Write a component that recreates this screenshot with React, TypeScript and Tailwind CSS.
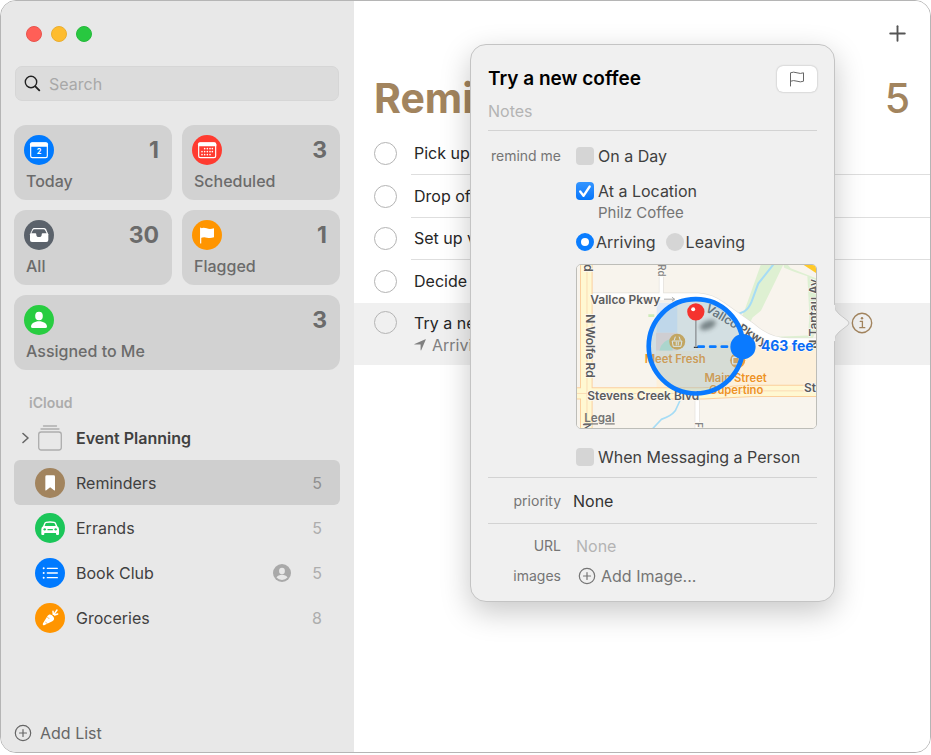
import type { ReactNode } from "react"
import { Plus } from "lucide-react"

const TodayIcon = () => (
    <>
        <rect x="20" y="24" width="50" height="44" rx="5" fill="none" stroke="#fff" strokeWidth="3.5" />
        <path d="M18 35V28q0-6 6-6h42q6 0 6 6v7z" fill="#fff" />
        <text x="45" y="57" textAnchor="middle" fontSize="22" fontWeight="700" fill="#fff">2</text>
    </>
)

const dots = [
    [38, 41], [46, 41], [54, 41], [61, 41],
    [30, 50], [38, 50], [46, 50], [54, 50], [61, 50],
    [30, 59], [38, 59], [46, 59], [54, 59],
]

const ScheduledIcon = () => (
    <>
        <rect x="20" y="24" width="51" height="44" rx="5" fill="none" stroke="#fff" strokeWidth="3.5" />
        <path d="M18 34V28q0-6 6-6h43q6 0 6 6v6z" fill="#fff" />
        {dots.map(([x, y]) => (
            <circle key={`${x}-${y}`} cx={x} cy={y} r="2.4" fill="#fff" />
        ))}
    </>
)

const AllIcon = () => (
    <>
        <path d="M30 24h30q4 0 6 4l7 15v17q0 6-6 6H24q-6 0-6-6V43l7-15q2-4 5-4z" fill="#fff" />
        <path d="M31 28h28q3 0 4 2l5 10H56q-3 0-3 4a8 7 0 0 1-16 0q0-4-3-4H22l5-10q1-2 4-2z" fill="#5b626b" />
    </>
)

const FlaggedIcon = () => (
    <>
        <path d="M26 24v45" stroke="#fff" strokeWidth="3.5" strokeLinecap="round" />
        <path d="M26 25q9-4 18 0t22 0v27q-11 4-21 1t-19 1z" fill="#fff" />
    </>
)

const PersonIcon = () => (
    <>
        <ellipse cx="45" cy="33" rx="11.5" ry="13" fill="#fff" />
        <path d="M21 65c0-9 11-16 24-16s24 7 24 16q0 4-5 4H26q-5 0-5-4z" fill="#fff" />
    </>
)

const BookmarkIcon = () => (
    <path d="M31 26q0-4 4-4h21q4 0 4 4v39q0 4-3 2L45.500 58 34 67q-3 2-3-2z" fill="#fff" />
)

const CarIcon = () => (
    <>
        <path
            fillRule="evenodd"
            d="M33 26q12-2 25 0 4 1 5 4l4 10q5 3 5 9v14q0 3-3 3h-3q-3 0-3-3v-3H28v3q0 3-3 3h-3q-3 0-3-3V49q0-6 5-9l4-10q1-3 5-4zM34 30q11-1 22 0 3 0 4 3l2 6H29l2-6q1-3 3-3z"
            fill="#fff"
        />
        <circle cx="29" cy="49" r="3.5" fill="#1bc659" />
        <circle cx="62" cy="49" r="3.5" fill="#1bc659" />
        <path d="M39 50h13" stroke="#1bc659" strokeWidth="4" strokeLinecap="round" />
    </>
)

const ListIcon = () => (
    <>
        <path d="M37 31h30M37 45h30M37 59h30" stroke="#fff" strokeWidth="4" strokeLinecap="round" />
        <circle cx="26" cy="31" r="3" fill="#fff" />
        <circle cx="26" cy="45" r="3" fill="#fff" />
        <circle cx="26" cy="59" r="3" fill="#fff" />
    </>
)

const CarrotIcon = () => (
    <>
        <path d="M24 66c-1-1-1-3 0-5l13-21c4-6 9-7 14-3l4 4c4 5 3 10-3 14L29 66c-2 1-4 1-5 0z" fill="#fff" />
        <path d="M55 34l-1-9M57 34l9-13M59 36l9-3" stroke="#fff" strokeWidth="4.5" strokeLinecap="round" />
        <path d="M37 42l5 5M37 62l-5-4" stroke="#ff9500" strokeWidth="2" strokeLinecap="round" />
    </>
)

function Badge({ color, children }: { color: string; children: ReactNode }) {
    return (
        <svg viewBox="0 0 90 90" className={`size-[30px] shrink-0 rounded-full ${color}`} aria-hidden="true">
            {children}
        </svg>
    )
}

const cards = [
    { title: "Today", count: 1, color: "bg-[#007aff]", icon: TodayIcon },
    { title: "Scheduled", count: 3, color: "bg-[#ff3b30]", icon: ScheduledIcon },
    { title: "All", count: 30, color: "bg-[#5b626b]", icon: AllIcon },
    { title: "Flagged", count: 1, color: "bg-[#ff9500]", icon: FlaggedIcon },
    { title: "Assigned to Me", count: 3, color: "bg-[#28cd41]", icon: PersonIcon, wide: true },
]

const lists = [
    { title: "Reminders", count: 5, color: "bg-[#a2845e]", icon: BookmarkIcon, selected: true },
    { title: "Errands", count: 5, color: "bg-[#1bc659]", icon: CarIcon },
    { title: "Book Club", count: 5, color: "bg-[#007aff]", icon: ListIcon, shared: true },
    { title: "Groceries", count: 8, color: "bg-[#ff9500]", icon: CarrotIcon },
]

const reminders = ["Pick up", "Drop off", "Set up v", "Decide"]

function CirclePlus() {
    return (
        <svg viewBox="0 0 18 18" className="size-[18px] shrink-0" fill="none" stroke="currentColor" aria-hidden="true">
            <circle cx="9" cy="9" r="7.7" strokeWidth="1.2" />
            <path d="M9 5.500v7M5.500 9h7" strokeWidth="1.2" strokeLinecap="round" />
        </svg>
    )
}

function Sidebar() {
    return (
        <aside className="flex w-[38%] shrink-0 flex-col bg-[#e8e8e8] pr-[14px] pl-[13px]">
            <div className="flex gap-[9px] pt-[25px] pl-3">
                <button aria-label="Close" className="size-4 rounded-full border border-[#e8544d] bg-[#ff5f57]" />
                <button aria-label="Minimize" className="size-4 rounded-full border border-[#eaae30] bg-[#febc2e]" />
                <button aria-label="Zoom" className="size-4 rounded-full border border-[#25b93b] bg-[#28c840]" />
            </div>

            <label className="mx-px mt-6 flex h-[35px] items-center gap-2 rounded-[7px] border border-[#d6d6d6] bg-[#dcdcdc] px-2">
                <svg viewBox="0 0 17 17" className="size-[17px] shrink-0" fill="none" stroke="#222" strokeLinecap="round" aria-hidden="true">
                    <circle cx="7" cy="7" r="5.7" strokeWidth="1.4" />
                    <path d="M11.300 11.300l4 4" strokeWidth="1.9" />
                </svg>
                <input
                    type="search"
                    aria-label="Search"
                    placeholder="Search"
                    className="w-full min-w-0 bg-transparent text-base outline-none placeholder:text-[#a8a8a8]"
                />
            </label>

            <div className="mt-6 grid grid-cols-2 gap-[10px]">
                {cards.map((card) => (
                    <button
                        key={card.title}
                        className={`flex h-[75px] flex-col rounded-xl bg-[#d2d2d2] pt-[10px] pr-[13px] pl-[10px] text-left text-[#6b6b6b] ${card.wide ? "col-span-2" : ""}`}
                    >
                        <span className="flex w-full items-center justify-between">
                            <Badge color={card.color}>
                                <card.icon />
                            </Badge>
                            <span className="text-[23px] leading-[30px] font-bold">{card.count}</span>
                        </span>
                        <span className="pt-1 pl-[2px] text-base leading-6 font-medium">{card.title}</span>
                    </button>
                ))}
            </div>

            <h2 className="mt-[23px] pl-[15px] text-sm leading-5 font-semibold text-[#acacac]">iCloud</h2>

            <nav className="mt-[2px] text-base text-[#404040]">
                <a href="#event-planning" className="flex h-[45px] items-center pl-2 font-semibold">
                    <svg viewBox="0 0 8 12" className="h-3 w-2 shrink-0" fill="none" stroke="#666" strokeWidth="1.6" strokeLinecap="round" strokeLinejoin="round" aria-hidden="true">
                        <path d="M1 1.500L6 6l-5 4.500" />
                    </svg>
                    <svg viewBox="0 0 24 26" className="ml-2 h-[26px] w-6 shrink-0" fill="none" stroke="#adadad" strokeLinecap="round" aria-hidden="true">
                        <path d="M5.500 1h13M3 4h18" strokeWidth="1.3" />
                        <rect x="0.7" y="7" width="22.6" height="18" rx="2.5" strokeWidth="1.3" />
                    </svg>
                    <span className="ml-[14px]">Event Planning</span>
                </a>
                {lists.map((list) => (
                    <a
                        key={list.title}
                        href={`#${list.title.toLowerCase().replace(" ", "-")}`}
                        className={`flex h-[45px] items-center rounded-md pr-[18px] pl-[21px] ${list.selected ? "bg-[#cfcfcf]" : ""}`}
                    >
                        <Badge color={list.color}>
                            <list.icon />
                        </Badge>
                        <span className="ml-[11px] flex-1">{list.title}</span>
                        {list.shared && (
                            <svg viewBox="0 0 18 18" className="mr-[21px] size-[18px]" aria-label="Shared">
                                <circle cx="9" cy="9" r="9" fill="#a9a9a9" />
                                <ellipse cx="9" cy="7" rx="2.9" ry="3.3" fill="#e8e8e8" />
                                <path d="M3.500 13.500c1-2 3-2.800 5.500-2.800s4.500.8 5.500 2.800a7.400 7.400 0 0 1-11 0z" fill="#e8e8e8" />
                            </svg>
                        )}
                        <span className={list.selected ? "text-[#909090]" : "text-[#adadad]"}>{list.count}</span>
                    </a>
                ))}
            </nav>

            <button className="mt-auto mb-[7px] flex h-6 items-center gap-2 self-start text-base text-[#666]">
                <CirclePlus />
                Add List
            </button>
        </aside>
    )
}

function LocationMap() {
    return (
        <svg
            viewBox="20 18 720 495"
            className="block h-[165px] w-full rounded-[5px] border border-[#bdbdb8]"
            preserveAspectRatio="xMidYMid slice"
            role="img"
            aria-label="Map"
        >
            <defs>
                <filter id="soft" x="-50%" y="-50%" width="200%" height="200%">
                    <feGaussianBlur stdDeviation="6" />
                </filter>
            </defs>
            <rect x="0" y="0" width="780" height="540" fill="#f8f4ed" />
            {/* parks and creek */}
            <path d="M574 18h68l-24 50-44 90-25 20-20 40-22-18 20-50z" fill="#def0d2" />
            <path d="M642 18h12l10 12 76 30v160l-14 28H630l-10-12 96-4 4-60-6-118-40-14-30-12z" fill="#def0d2" />
            <path d="M700 18h40v26z" fill="#ffc928" />
            <path d="M612 18l-46 58-20 54q-8 20-22 30l-28 12" fill="none" stroke="#a6dcf5" strokeWidth="6" />
            <path d="M248 513l26-28q30-10 42-26l14-30" fill="none" stroke="#a6dcf5" strokeWidth="5" />
            {/* blocks */}
            <path d="M260 134h62v90h-62z" fill="#dbe8f8" />
            <path d="M258 224h64v54h-64z" fill="#f3dcd6" />
            <path d="M268 278q6-32 40-36v36z" fill="#bfe6cf" />
            <path d="M235 168h18v9h-18z" fill="#cdebb8" />
            <path d="M258 278h130l80-30h272v136l-480 14z" fill="#fdf0da" />
            {/* streets */}
            <path d="M64 116h320q40 2 74 28l90 64q50 44 110 44h82" fill="none" stroke="#e2dfda" strokeWidth="26" />
            <path d="M274 18v90M382 410v103" stroke="#e2dfda" strokeWidth="15" />
            <path d="M64 116h320q40 2 74 28l90 64q50 44 110 44h82" fill="none" stroke="#fff" strokeWidth="22" />
            <path d="M274 18v90M382 410v103" stroke="#fff" strokeWidth="11" />
            <path d="M20 407h380l150-8h190" fill="none" stroke="#fbcf9d" strokeWidth="37" />
            <path d="M48 18v495" stroke="#fbcf9d" strokeWidth="38" />
            <path d="M20 407h380l150-8h190" fill="none" stroke="#fff8d2" strokeWidth="31" />
            <path d="M48 18v495" stroke="#fff8d2" strokeWidth="32" />
            <path d="M20 407h380l150-8h190M50 18v495" fill="none" stroke="#fbdcb4" strokeWidth="3" />
            <path d="M282 123h32m-8-6l8 6-8 6" fill="none" stroke="#aaa" strokeWidth="3" />

            <g fontWeight="600" fontSize="36" fill="#5c5c5e" stroke="#fbf8f2" strokeWidth="5" strokeLinejoin="round" paintOrder="stroke">
                <text x="60" y="136">Vallco Pkwy</text>
                <text x="51" y="427">Stevens Creek Blvd</text>
                <text x="704" y="403">St</text>
                <text transform="translate(46 168) rotate(90)">N Wolfe Rd</text>
                <text transform="translate(42 18) rotate(90)">d</text>
                <text transform="translate(38 496) rotate(90)" fontSize="32">N</text>
                <text transform="translate(264 18) rotate(90)" fontSize="29" fill="#858585">Rd</text>
                <text transform="translate(375 494) rotate(90)" fontSize="29" fill="#858585">F</text>
                <text transform="translate(405 158) rotate(31)">Vallco Pkwy</text>
                <text transform="translate(746 272) rotate(-90)">N Tantau Av</text>
            </g>
            <g fontWeight="600" fontSize="34" fill="#ee9426" stroke="#fdf3e2" strokeWidth="4" strokeLinejoin="round" paintOrder="stroke">
                <text x="224" y="314">Meet Fresh</text>
                <text x="404" y="372">Main Street</text>
                <text x="418" y="410">Cupertino</text>
            </g>
            <circle cx="504" cy="307" r="23" fill="#ee9f3c" />
            <rect x="489" y="298" width="20" height="20" rx="3" fill="none" stroke="#fff" strokeWidth="4" />
            <circle cx="322" cy="251" r="24" fill="#e0a236" />
            <path d="M308 249h28l-3 16h-22zM313 246l3-9M331 246l-3-9M319 252v9M325 252v9" fill="none" stroke="#fff" strokeWidth="3" strokeLinecap="round" />

            <circle cx="378" cy="265" r="142" fill="#7fb0c9" fillOpacity="0.3" stroke="#0a7aff" strokeWidth="14" />
            <ellipse cx="414" cy="201" rx="26" ry="13" transform="rotate(-22 414 201)" fill="#3c474b" fillOpacity="0.6" filter="url(#soft)" />
            <path d="M386 266h104" stroke="#0a7aff" strokeWidth="8" strokeDasharray="16 19" strokeLinecap="round" />
            <path d="M372 268h12" stroke="#333" strokeWidth="4" />
            <path d="M378 180v88" stroke="#9aa0a3" strokeWidth="5" />
            <circle cx="378" cy="161" r="26" fill="#f5332e" />
            <circle cx="370" cy="153" r="6" fill="#fff" />
            <circle cx="520" cy="266" r="38" fill="#0a7aff" />
            <text x="574" y="280" fontSize="42" fontWeight="700" fill="#0a6cf5" stroke="#fff" strokeWidth="3" paintOrder="stroke">463 fee</text>
            <text x="42" y="494" fontSize="35" fontWeight="600" fill="#747474" textDecoration="underline">Legal</text>
        </svg>
    )
}

function CheckRow({ label, checked }: { label: string; checked?: boolean }) {
    return (
        <label className="flex h-5 items-center gap-1">
            <span className="grid shrink-0">
                <input
                    type="checkbox"
                    defaultChecked={checked}
                    className="peer col-start-1 row-start-1 size-[18px] appearance-none rounded-[4px] bg-[#d5d5d5] checked:bg-gradient-to-b checked:from-[#3395ff] checked:to-[#0075fb]"
                />
                <svg viewBox="0 0 18 18" className="pointer-events-none col-start-1 row-start-1 hidden size-[18px] peer-checked:block" fill="none" stroke="#fff" strokeWidth="2.3" strokeLinecap="round" strokeLinejoin="round" aria-hidden="true">
                    <path d="M4.200 9.500l3.300 4.300L13.700 4.500" />
                </svg>
            </span>
            {label}
        </label>
    )
}

function RadioOption({ label, checked }: { label: string; checked?: boolean }) {
    return (
        <label className="flex h-5 items-center gap-[2px]">
            <input
                type="radio"
                name="trigger"
                defaultChecked={checked}
                className="size-[18px] shrink-0 appearance-none rounded-full bg-[#d5d5d5] checked:border-[5px] checked:border-[#0a7dff] checked:bg-white"
            />
            {label}
        </label>
    )
}

const fieldRow = "grid grid-cols-[73px_1fr] gap-x-[15px]"
const fieldLabel = "text-right text-sm leading-5 whitespace-nowrap text-[#757575]"

function DetailPopover() {
    return (
        <section className="absolute top-[43px] right-[95px] w-[365px] rounded-2xl border border-[#c4c4c4] bg-[#f0f0f0] px-[17px] shadow-[0_10px_30px_rgba(0,0,0,0.22)]">
            <svg viewBox="0 0 16 38" className="absolute top-[259px] -right-4 h-[38px] w-4" aria-hidden="true">
                <path d="M0 0q0 6 5 10l9 7q2 2 0 4l-9 7q-5 4-5 10" fill="#f0f0f0" stroke="#c8c8c8" />
                <path d="M0 1v36" stroke="#f0f0f0" strokeWidth="2" />
            </svg>

            <div className="mt-5 flex h-7 items-center gap-2">
                <input
                    aria-label="Title"
                    defaultValue="Try a new coffee"
                    className="w-full min-w-0 bg-transparent text-[19px] font-semibold text-black outline-none"
                />
                <button aria-label="Flag" className="flex h-[26px] w-10 shrink-0 items-center justify-center rounded-md bg-white shadow-[0_0_2px_rgba(0,0,0,0.3)]">
                    <svg viewBox="0 0 16 16" className="size-4" fill="none" stroke="#666" strokeLinecap="round" strokeLinejoin="round" aria-hidden="true">
                        <path d="M1.500 15V1.800q3-1.300 6.500 0t6.500 0v8.400q-3 1.300-6.500 0t-6.500 0" />
                    </svg>
                </button>
            </div>
            <input
                aria-label="Notes"
                placeholder="Notes"
                className="mt-[6px] block h-6 w-full bg-transparent text-base outline-none placeholder:text-[#b4b4b4]"
            />

            <div className={`${fieldRow} mt-[7px] border-t border-[#d3d3d3] pt-[15px] pb-[10px] text-base text-[#404040]`}>
                <span className={fieldLabel}>remind me</span>
                <div>
                    <CheckRow label="On a Day" />
                    <div className="mt-[15px]">
                        <CheckRow label="At a Location" checked />
                    </div>
                    <p className="mt-[2px] pl-[22px] text-[15px] leading-5 text-[#757575]">Philz Coffee</p>
                    <div className="mt-[9px] mb-3 flex gap-[10px]">
                        <RadioOption label="Arriving" checked />
                        <RadioOption label="Leaving" />
                    </div>
                    <LocationMap />
                    <div className="mt-[18px]">
                        <CheckRow label="When Messaging a Person" />
                    </div>
                </div>
            </div>

            <div className={`${fieldRow} h-[46px] items-center border-t border-[#d3d3d3]`}>
                <label htmlFor="priority" className={fieldLabel}>priority</label>
                <select id="priority" className="-ml-[3px] appearance-none bg-transparent text-base leading-5 text-[#333] outline-none">
                    <option>None</option>
                </select>
            </div>

            <div className={`${fieldRow} gap-y-[10px] border-t border-[#d3d3d3] pt-3 pb-[15px]`}>
                <label htmlFor="url" className={fieldLabel}>URL</label>
                <input
                    id="url"
                    placeholder="None"
                    className="h-5 min-w-0 bg-transparent text-base outline-none placeholder:text-[#b4b4b4]"
                />
                <span className={fieldLabel}>images</span>
                <button className="flex h-5 items-center gap-[5px] pl-[2px] text-base text-[#757575]">
                    <CirclePlus />
                    Add Image...
                </button>
            </div>
        </section>
    )
}

function CompleteButton({ label }: { label: string }) {
    return (
        <button
            aria-label={`Complete ${label}`}
            className="size-[23px] shrink-0 rounded-full border border-[#b4b4b4]"
        />
    )
}

function ReminderList() {
    return (
        <main className="relative min-w-0 flex-1 bg-white">
            <div className="flex h-16 items-center justify-end pr-5">
                <button aria-label="Add Reminder" className="text-[#555]">
                    <Plus size={25} strokeWidth={1.8} />
                </button>
            </div>
            <header className="mt-[9px] flex h-[49px] items-center justify-between px-5 text-[41px] text-[#a2845e]">
                <h1 className="font-bold">Reminders</h1>
                <span className="font-medium">5</span>
            </header>

            <ul className="mt-[9px] text-base text-[#262626]">
                <li>
                    <ul className="grid h-[171px] auto-rows-fr">
                        {reminders.map((title, i) => (
                            <li key={title} className="flex items-center pl-5">
                                <CompleteButton label={title} />
                                <span className={`ml-[14px] flex h-full flex-1 items-center border-b pl-[3px] ${i < 3 ? "border-[#dedede]" : "border-transparent"}`}>
                                    {title}
                                </span>
                            </li>
                        ))}
                    </ul>
                </li>
                <li className="flex h-[62px] gap-[17px] bg-[#f0f0f0] pt-2 pr-[57px] pl-5">
                    <CompleteButton label="Try a new coffee" />
                    <div className="flex-1">
                        <p className="leading-6">Try a new coffee</p>
                        <p className="flex items-center gap-[6px] leading-5 text-[#808080]">
                            <svg viewBox="0 0 12 12" className="size-3" fill="currentColor" aria-hidden="true">
                                <path d="M11.400 0.300q0.600-0.200 0.300 0.500L7.200 11.200q-0.400 0.800-0.600-0.100V5.600H0.700q-0.900-0.100-0.100-0.600z" />
                            </svg>
                            Arriving
                        </p>
                    </div>
                    <button aria-label="Show details" className="h-[23px] text-[#a2845e]">
                        <svg viewBox="0 0 22 22" className="size-[22px]" fill="none" stroke="currentColor" strokeLinecap="round" aria-hidden="true">
                            <circle cx="11" cy="11" r="9.7" strokeWidth="1.4" />
                            <path d="M9.200 9.300h2.200v6.200M8.800 15.700h5" strokeWidth="1.3" />
                            <circle cx="11" cy="6.3" r="1.2" fill="currentColor" stroke="none" />
                        </svg>
                    </button>
                </li>
            </ul>

            <DetailPopover />
        </main>
    )
}

export default function App() {
    return (
        <div className="flex min-h-screen bg-white pb-[2px] font-[Inter,'Liberation_Sans',sans-serif]">
            <div className="flex flex-1 overflow-hidden rounded-2xl border border-[#b5b5b5]">
                <Sidebar />
                <ReminderList />
            </div>
        </div>
    )
}
